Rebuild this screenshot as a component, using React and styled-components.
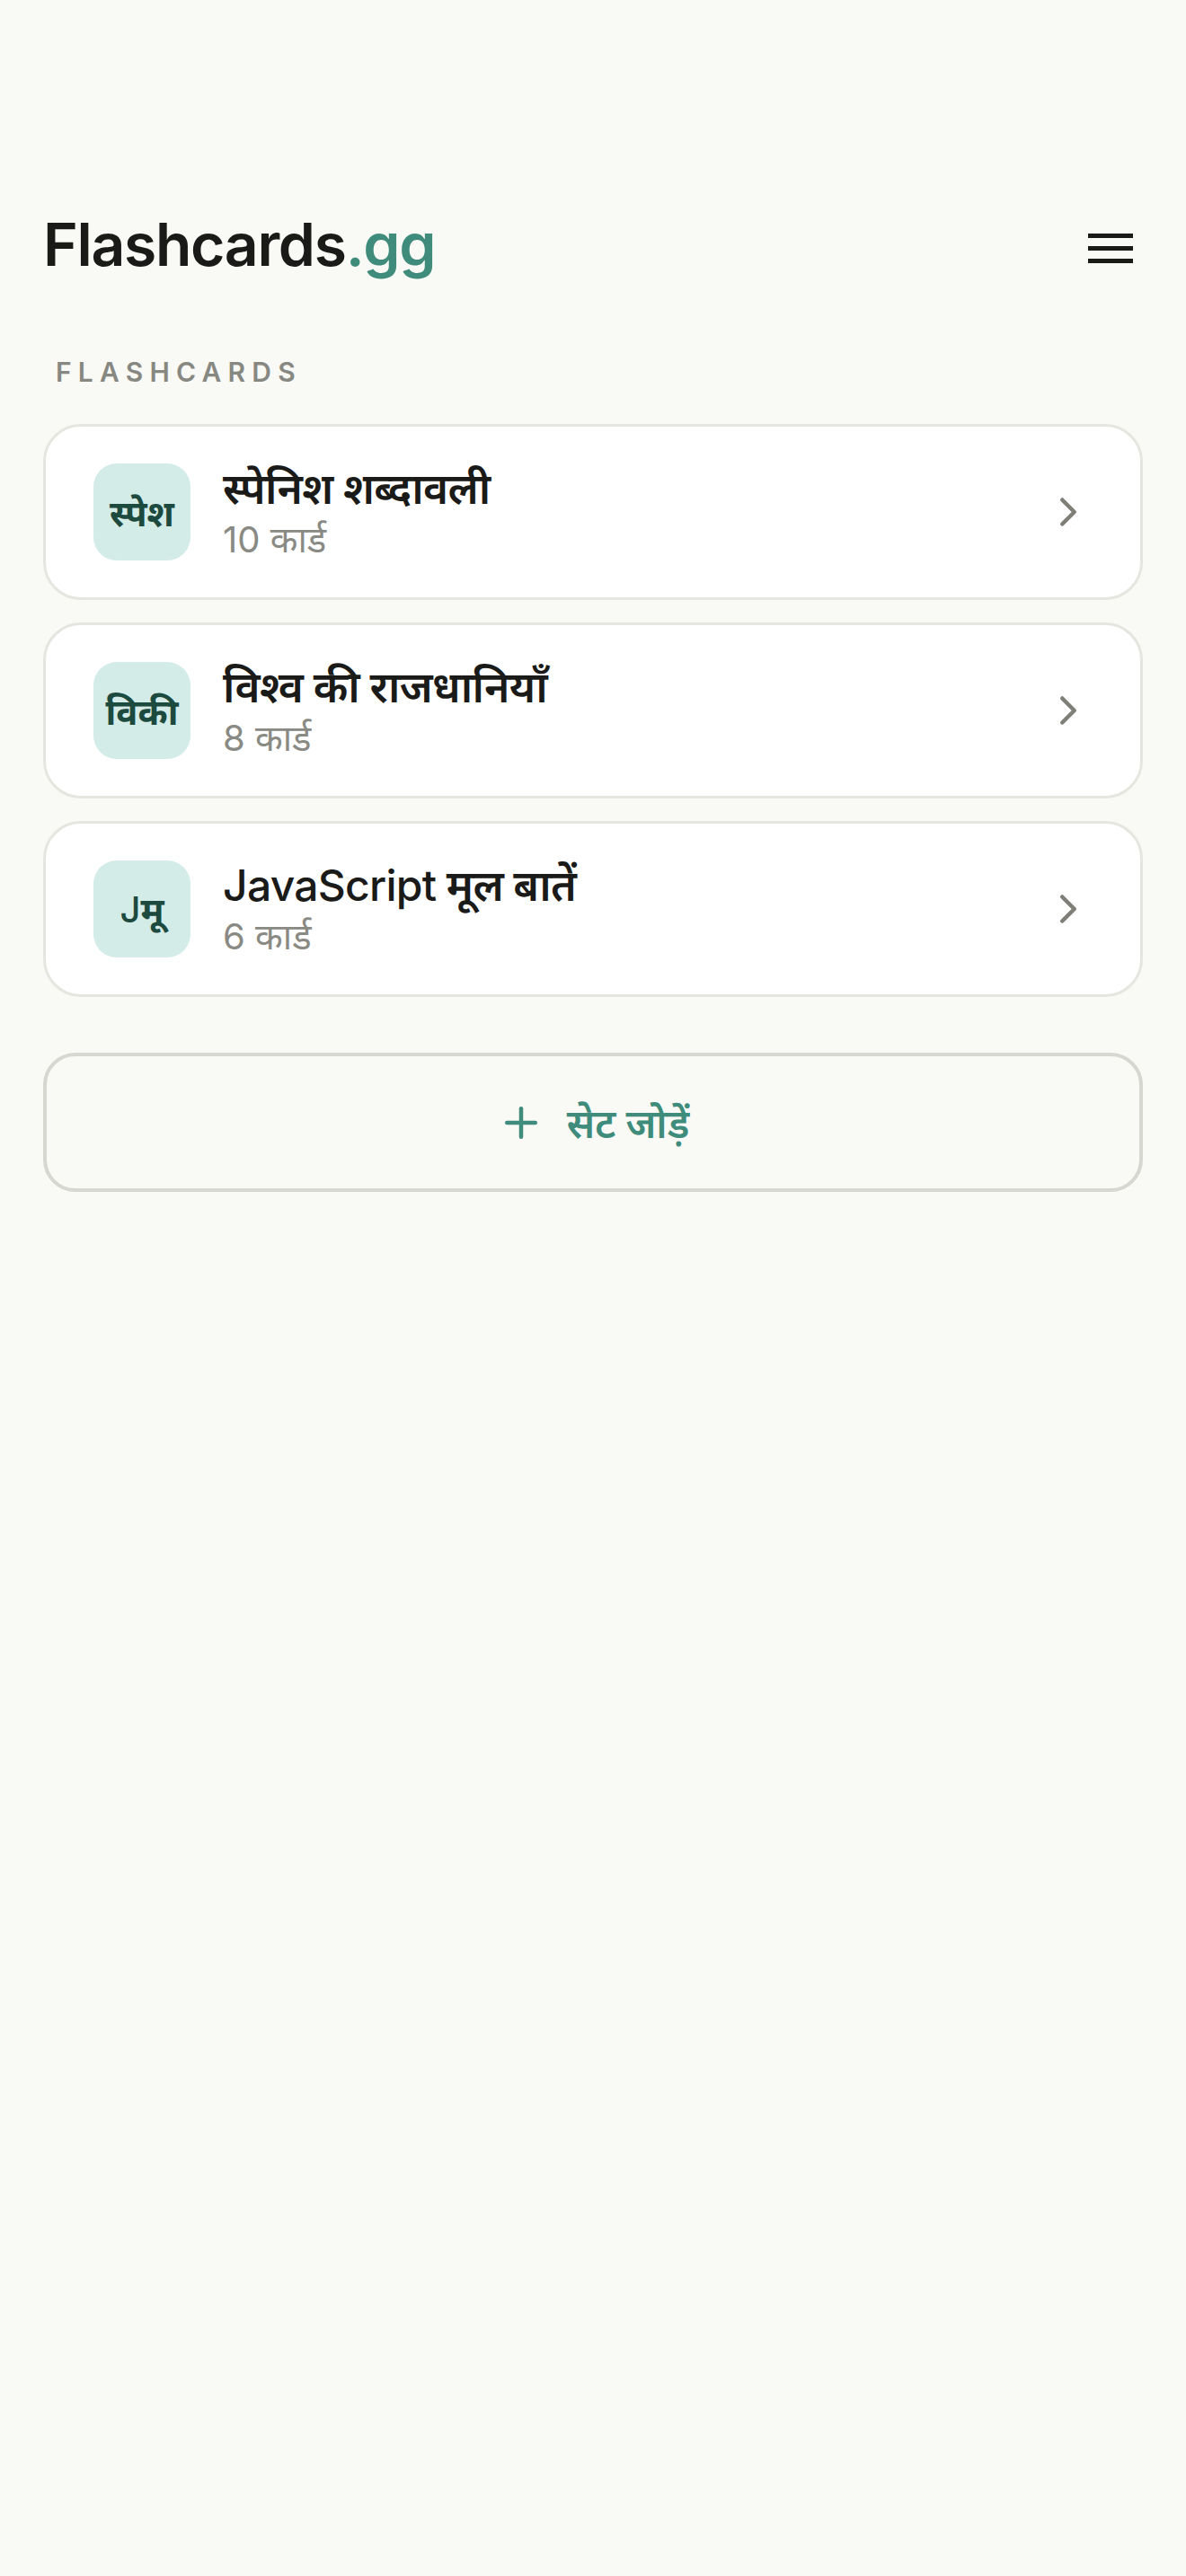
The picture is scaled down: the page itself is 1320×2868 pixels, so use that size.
import React from "react";
import styled, { createGlobalStyle } from "styled-components";
import { ChevronRight, Plus } from "lucide-react";

const sets = [
  { id: 1, badge: "स्पेश", title: "स्पेनिश शब्दावली", count: 10 },
  { id: 2, badge: "विकी", title: "विश्व की राजधानियाँ", count: 8 },
  { id: 3, badge: "Jमू", title: "JavaScript मूल बातें", count: 6 },
];

// Latin runs render lighter than the Devanagari ones
const renderMixed = (text) =>
  text.split(/([A-Za-z]+)/).map((part, i) =>
    /^[A-Za-z]+$/.test(part) ? <Latin key={i}>{part}</Latin> : part
  );

const App = () => {
  return (
    <>
      <GlobalStyle />
      <Page>
        <Header>
          <Logo>
            Flashcards<span>.gg</span>
          </Logo>
          <MenuButton aria-label="menu">
            <svg width="50" height="34" viewBox="0 0 50 34">
              <rect x="0" y="1" width="50" height="5" fill="#1a1a18" />
              <rect x="0" y="15" width="50" height="5" fill="#1a1a18" />
              <rect x="0" y="29" width="50" height="5" fill="#1a1a18" />
            </svg>
          </MenuButton>
        </Header>

        <SectionLabel>Flashcards</SectionLabel>

        <SetList>
          {sets.map((set) => (
            <SetCard key={set.id}>
              <Badge>{renderMixed(set.badge)}</Badge>
              <SetInfo>
                <SetTitle>{renderMixed(set.title)}</SetTitle>
                <SetCount>{set.count} कार्ड</SetCount>
              </SetInfo>
              <Chevron>
                <ChevronRight size={54} strokeWidth={2} />
              </Chevron>
            </SetCard>
          ))}
        </SetList>

        <AddButton>
          <Plus size={54} strokeWidth={2} />
          <span>सेट जोड़ें</span>
        </AddButton>
      </Page>
    </>
  );
};

const GlobalStyle = createGlobalStyle`
  * {
    box-sizing: border-box;
  }
  body {
    margin: 0;
    background: #f9f9f5;
    font-family: Inter, "Noto Sans", sans-serif;
  }
`;

const Page = styled.main`
  min-height: 100vh;
  background: #f9f9f5;
  padding: 232px 48px 0 48px;
`;

const Header = styled.header`
  display: flex;
  justify-content: space-between;
  align-items: center;
`;

const Logo = styled.h1`
  margin: 0;
  font-size: 66px;
  line-height: 80px;
  font-weight: 600;
  letter-spacing: -0.02em;
  color: #1a1a18;

  span {
    color: #3f8c7c;
  }
`;

const MenuButton = styled.button`
  width: 72px;
  height: 72px;
  margin-top: 8px;
  padding: 0;
  border: none;
  background: none;
  display: flex;
  align-items: center;
  justify-content: center;
`;

const SectionLabel = styled.h2`
  margin: 84px 0 0 0;
  padding-left: 14px;
  font-size: 30px;
  line-height: 36px;
  font-weight: 600;
  letter-spacing: 0.24em;
  text-transform: uppercase;
  color: #888882;
`;

const SetList = styled.div`
  display: flex;
  flex-direction: column;
  gap: 25px;
  margin-top: 40px;
`;

const SetCard = styled.div`
  display: flex;
  align-items: center;
  gap: 36px;
  padding: 41px 53px;
  background: #ffffff;
  border: 3px solid #e6e6e0;
  border-radius: 42px;
`;

const Latin = styled.span`
  font-weight: 500;
`;

const Badge = styled.div`
  flex: 0 0 108px;
  height: 108px;
  border-radius: 26px;
  background: #d4ece8;
  display: flex;
  align-items: center;
  justify-content: center;
  font-size: 40px;
  font-weight: 700;
  color: #1d4a3f;
`;

const SetInfo = styled.div`
  flex: 1;
  display: flex;
  flex-direction: column;
`;

const SetTitle = styled.div`
  font-size: 48px;
  line-height: 56px;
  font-weight: 600;
  letter-spacing: -0.015em;
  color: #1a1a18;
`;

const SetCount = styled.div`
  margin-top: 6px;
  font-size: 40px;
  line-height: 46px;
  font-weight: 400;
  color: #8a8a84;
`;

const Chevron = styled.div`
  display: flex;
  color: #7f7f78;
`;

const AddButton = styled.button`
  width: 100%;
  height: 155px;
  margin-top: 62px;
  display: flex;
  align-items: center;
  justify-content: center;
  gap: 24px;
  background: transparent;
  border: 4.5px solid #d7d7d1;
  border-radius: 36px;
  color: #3f8c7c;
  font-family: Inter, "Noto Sans", sans-serif;
  font-size: 44px;
  font-weight: 600;
`;

export default App;
